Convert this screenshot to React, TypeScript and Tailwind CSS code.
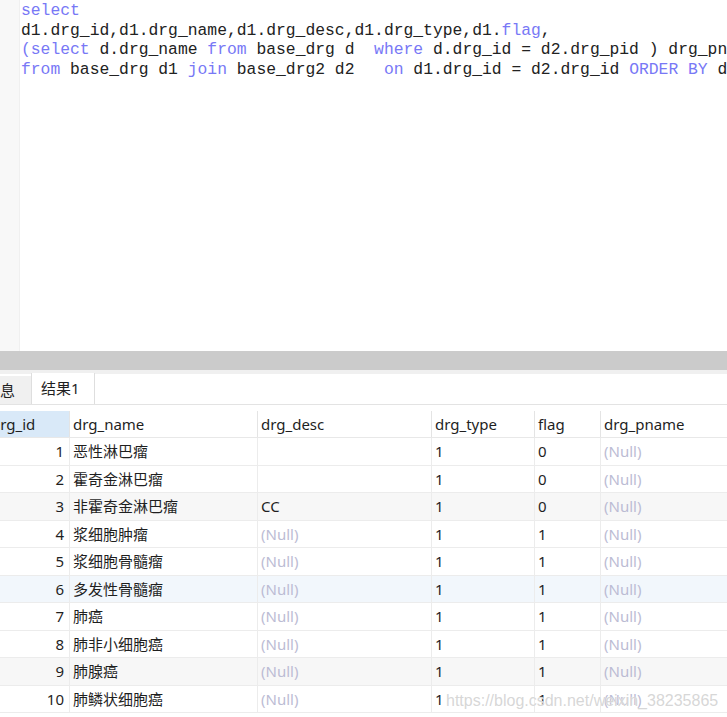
import React from 'react';

const KW = 'text-[#7878f6]';

const rows: { id: number; name: string; desc: string | null; type: string; flag: string; bg: string }[] = [
  { id: 1, name: '恶性淋巴瘤', desc: '', type: '1', flag: '0', bg: 'bg-white' },
  { id: 2, name: '霍奇金淋巴瘤', desc: '', type: '1', flag: '0', bg: 'bg-white' },
  { id: 3, name: '非霍奇金淋巴瘤', desc: 'CC', type: '1', flag: '0', bg: 'bg-[#f7f7f7]' },
  { id: 4, name: '浆细胞肿瘤', desc: null, type: '1', flag: '1', bg: 'bg-white' },
  { id: 5, name: '浆细胞骨髓瘤', desc: null, type: '1', flag: '1', bg: 'bg-white' },
  { id: 6, name: '多发性骨髓瘤', desc: null, type: '1', flag: '1', bg: 'bg-[#f2f7fc]' },
  { id: 7, name: '肺癌', desc: null, type: '1', flag: '1', bg: 'bg-white' },
  { id: 8, name: '肺非小细胞癌', desc: null, type: '1', flag: '1', bg: 'bg-white' },
  { id: 9, name: '肺腺癌', desc: null, type: '1', flag: '1', bg: 'bg-[#f7f7f7]' },
  { id: 10, name: '肺鳞状细胞癌', desc: null, type: '1', flag: '1', bg: 'bg-white' },
];

const cellFont = { fontFamily: '"Noto Sans", "Noto Sans CJK SC", sans-serif' };

function Null() {
  return <span className="text-[#bcbcd4]">(Null)</span>;
}

export default function App() {
  return (
    <div className="w-[727px] h-[717px] overflow-hidden bg-white relative flex flex-col">
      {/* Editor */}
      <div className="h-[351px] flex shrink-0">
        <div className="w-[20px] bg-[#f8f8f8] border-r border-[#f0f0f0] shrink-0" />
        <div
          className="flex-1 overflow-hidden whitespace-pre text-[16.35px] leading-[19.7px] text-[#222] pl-[1px] pt-[1px]"
          style={{ fontFamily: '"Liberation Mono", "Courier New", monospace' }}
        >
          <div className={KW}>select</div>
          <div>
            d1.drg_id,d1.drg_name,d1.drg_desc,d1.drg_type,d1.<span className={KW}>flag</span>,
          </div>
          <div>
            <span className={KW}>(select</span> d.drg_name <span className={KW}>from</span> base_drg d{'  '}
            <span className={KW}>where</span> d.drg_id = d2.drg_pid ) drg_pname,d2.drg_pid
          </div>
          <div>
            <span className={KW}>from</span> base_drg d1 <span className={KW}>join</span> base_drg2 d2{'   '}
            <span className={KW}>on</span> d1.drg_id = d2.drg_id <span className={KW}>ORDER BY</span> d1.drg_id
          </div>
        </div>
      </div>

      {/* Splitter */}
      <div className="h-[19px] bg-[#cbcbcb] shrink-0" />
      <div className="h-[4px] bg-[#f0f0f0] shrink-0" />

      {/* Tabs */}
      <div className="h-[31px] flex items-end border-b border-[#e3e3e3] shrink-0 text-[15px] text-[#1f1f1f]" style={cellFont}>
        <div className="w-[31px] h-[28px] bg-[#f0f0f0] overflow-hidden flex items-center">
          <span className="ml-[-15px]">信息</span>
        </div>
        <div className="w-[64px] h-[31px] bg-white border-l border-r border-[#dedede] flex items-center pl-[9px]">
          结果1
        </div>
      </div>

      {/* Table */}
      <div className="mt-[6px] text-[15px] text-[#1f1f1f]" style={cellFont}>
        <div className="flex h-[27px] border-b border-[#e8e8e8]">
          <div className="w-[69px] bg-[#d9e9f8] overflow-hidden flex items-center">
            <span className="ml-[-9px]">drg_id</span>
          </div>
          <div className="w-[188px] border-l border-[#e4e4e4] flex items-center pl-[3px]">drg_name</div>
          <div className="w-[174px] border-l border-[#e4e4e4] flex items-center pl-[3px]">drg_desc</div>
          <div className="w-[103px] border-l border-[#e4e4e4] flex items-center pl-[3px]">drg_type</div>
          <div className="w-[66px] border-l border-[#e4e4e4] flex items-center pl-[3px]">flag</div>
          <div className="flex-1 border-l border-[#e4e4e4] flex items-center pl-[3px]">drg_pname</div>
        </div>
        {rows.map((r) => (
          <div key={r.id} className={`flex h-[27.5px] border-b border-[#ececec] ${r.bg}`}>
            <div className="w-[69px] flex items-center justify-end pr-[5px]">{r.id}</div>
            <div className="w-[188px] border-l border-[#ececec] flex items-center pl-[3px]">{r.name}</div>
            <div className="w-[174px] border-l border-[#ececec] flex items-center pl-[3px]">
              {r.desc === null ? <Null /> : r.desc}
            </div>
            <div className="w-[103px] border-l border-[#ececec] flex items-center pl-[3px]">{r.type}</div>
            <div className="w-[66px] border-l border-[#ececec] flex items-center pl-[3px]">{r.flag}</div>
            <div className="flex-1 border-l border-[#ececec] flex items-center pl-[3px]">
              <Null />
            </div>
          </div>
        ))}
      </div>

      {/* Watermark */}
      <div
        className="absolute left-[446px] top-[689px] text-[16px] text-[#d2d2d2]/90 whitespace-nowrap"
        style={{ fontFamily: '"Liberation Sans", Arial, sans-serif', textShadow: '0 0 1px #fff' }}
      >
        https://blog.csdn.net/weixin_38235865
      </div>
    </div>
  );
}
